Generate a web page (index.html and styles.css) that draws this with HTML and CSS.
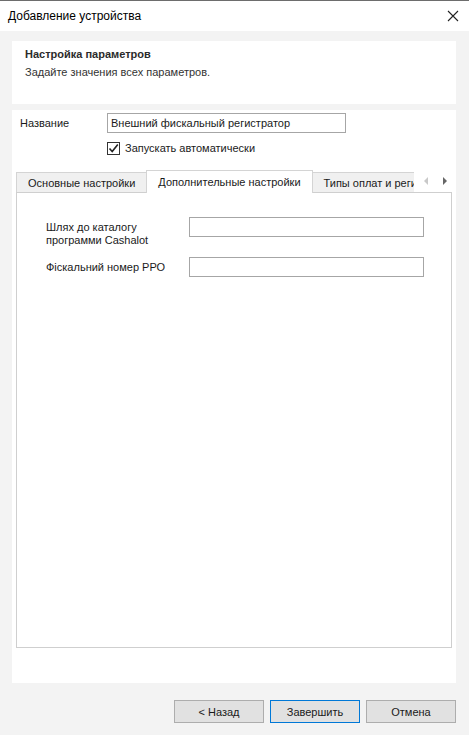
FILE: index.html
```html
<!DOCTYPE html>
<html lang="ru">
<head>
    <meta charset="UTF-8">
    <title>Добавление устройства</title>
    <link rel="stylesheet" href="styles.css">
</head>
<body>

<div class="window">
    <div class="titlebar">
        <span>Добавление устройства</span>
        <svg class="close" width="12" height="12" viewBox="0 0 12 12">
            <path d="M1 1 L11 11 M11 1 L1 11" stroke="#222" stroke-width="1.1" fill="none"/>
        </svg>
    </div>

    <div class="content">
        <div class="panel header">
            <div class="header-title">Настройка параметров</div>
            <div class="header-sub">Задайте значения всех параметров.</div>
        </div>

        <div class="panel main">
            <div class="name-row">
                <label class="name-label">Название</label>
                <input class="text-input name-input" type="text" value="Внешний фискальный регистратор">
            </div>
            <div class="check-row">
                <span class="checkbox">
                    <svg width="11" height="11" viewBox="0 0 11 11">
                        <path d="M1.5 5.5 L4.2 8.5 L9.8 1.5" stroke="#222" stroke-width="1.6" fill="none"/>
                    </svg>
                </span>
                <span>Запускать автоматически</span>
            </div>

            <div class="tabs">
                <div class="tab-strip">
                    <div class="tab-list">
                        <div class="tab">Основные настройки</div>
                        <div class="tab active">Дополнительные настройки</div>
                        <div class="tab">Типы оплат и регистрация</div>
                    </div>
                    <div class="tab-arrows">
                        <svg width="6" height="8" viewBox="0 0 6 8"><path d="M5 0 L1 4 L5 8 Z" fill="#c9c9c9"/></svg>
                        <svg width="6" height="8" viewBox="0 0 6 8"><path d="M1 0 L5 4 L1 8 Z" fill="#666"/></svg>
                    </div>
                </div>
                <div class="tab-page">
                    <div class="field">
                        <label class="field-label">Шлях до каталогу<br>программи Cashalot</label>
                        <input class="text-input field-input" type="text">
                    </div>
                    <div class="field">
                        <label class="field-label">Фіскальний номер РРО</label>
                        <input class="text-input field-input" type="text">
                    </div>
                </div>
            </div>
        </div>

        <div class="buttons">
            <button class="btn">&lt; Назад</button>
            <button class="btn default">Завершить</button>
            <button class="btn">Отмена</button>
        </div>
    </div>
</div>

</body>
</html>
```

FILE: styles.css
```css
body {
    margin: 0;
    font-family: "Liberation Sans", Arial, sans-serif;
    font-size: 11px;
    color: #1a1a1a;
}
.window {
    width: 469px;
    height: 735px;
    background: #f3f3f3;
    border-top: 1px solid #6d6d6d;
    box-sizing: border-box;
}
.titlebar {
    height: 30px;
    background: white;
    display: flex;
    justify-content: space-between;
    align-items: center;
    padding: 0 10px 0 8px;
    color: #000;
    font-size: 12px;
}
.content {
    padding: 10px 13px 0 12px;
}
.panel {
    background: white;
}
.header {
    height: 63px;
    box-sizing: border-box;
    padding: 6px 0 0 13px;
}
.header-title {
    font-weight: bold;
    color: #2b2b2b;
    line-height: 14px;
}
.header-sub {
    margin-top: 4px;
    color: #333;
    line-height: 14px;
}
.main {
    margin-top: 6px;
    height: 573px;
    box-sizing: border-box;
    padding: 3px 4px 0 4px;
}
.name-row {
    display: flex;
    align-items: center;
    padding-left: 4px;
}
.name-label {
    width: 87px;
}
.text-input {
    box-sizing: border-box;
    height: 20px;
    border: 1px solid #a6a6a6;
    padding: 0 3px;
    font-family: inherit;
    font-size: 11px;
    color: #1a1a1a;
    outline: none;
}
.name-input {
    width: 239px;
}
.check-row {
    display: flex;
    align-items: center;
    gap: 5px;
    margin: 9px 0 0 91px;
    line-height: 13px;
}
.checkbox {
    width: 13px;
    height: 13px;
    box-sizing: border-box;
    border: 1px solid #333;
    background: white;
    display: flex;
    justify-content: center;
    align-items: center;
}
.tabs {
    margin-top: 15px;
    width: 436px;
}
.tab-strip {
    display: flex;
    height: 22px;
    align-items: flex-end;
    position: relative;
    z-index: 1;
}
.tab-list {
    display: flex;
    width: 398px;
    overflow: hidden;
    align-items: flex-end;
    height: 23px;
    margin-bottom: -1px;
}
.tab {
    height: 20px;
    box-sizing: border-box;
    padding: 4px 11px 0 11px;
    border: 1px solid #d4d4d4;
    border-bottom: none;
    border-right: none;
    background: #f0f0f0;
    white-space: nowrap;
    margin-bottom: 1px;
}
.tab.active {
    height: 23px;
    background: white;
    padding: 5px 11px 0 11px;
    border-right: 1px solid #d4d4d4;
    margin-bottom: 0;
}
.tab.active + .tab {
    border-left: none;
}
.tab-arrows {
    display: flex;
    gap: 13px;
    align-self: center;
    margin-left: 9px;
}
.tab-page {
    height: 456px;
    box-sizing: border-box;
    border: 1px solid #cfcfcf;
    background: white;
    padding: 24px 0 0 29px;
}
.field {
    display: flex;
    align-items: flex-start;
    height: 20px;
    margin-bottom: 20px;
}
.field-label {
    width: 143px;
    line-height: 13px;
    margin-top: 4px;
}
.field-input {
    width: 235px;
}
.buttons {
    display: flex;
    justify-content: flex-end;
    gap: 6px;
    margin-top: 17px;
}
.btn {
    width: 90px;
    height: 23px;
    border: 1px solid #adadad;
    background: #e1e1e1;
    font-family: inherit;
    font-size: 11px;
    color: #1a1a1a;
    padding: 0;
}
.btn.default {
    border-color: #0078d7;
}
```
